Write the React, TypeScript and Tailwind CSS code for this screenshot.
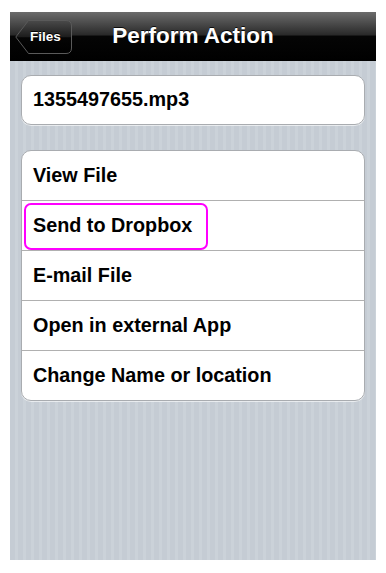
const rows = ['View File', 'Send to Dropbox', 'E-mail File', 'Open in external App', 'Change Name or location'];

function BackButton() {
  return (
    <button className="relative h-[34px] w-[57px] shrink-0 text-left">
      <svg className="absolute inset-0" width="57" height="34" viewBox="0 0 57 34">
        <defs>
          <linearGradient id="bb" x1="0" y1="0" x2="0" y2="1">
            <stop offset="0" stopColor="#4a4a4a" />
            <stop offset="0.5" stopColor="#1c1c1c" />
            <stop offset="0.52" stopColor="#050505" />
            <stop offset="1" stopColor="#000" />
          </linearGradient>
        </defs>
        <path
          d="M0.8 17 L13.5 0.5 H51 Q56.5 0.5 56.5 6 V28 Q56.5 33.5 51 33.5 H13.5 Z"
          fill="url(#bb)"
          stroke="#5a5a5a"
          strokeWidth="1"
        />
      </svg>
      <span className="relative block pl-[15px] pt-[1px] text-left text-[13.5px] font-bold text-white [text-shadow:0_-1px_0_rgba(0,0,0,0.9)]">
        Files
      </span>
    </button>
  );
}

export default function App() {
  return (
    <div className="h-[573px] w-[386px] bg-white px-[10px] pt-[12px] font-['Liberation_Sans',Arial,sans-serif]">
      <div className="flex h-[548px] flex-col bg-[repeating-linear-gradient(90deg,#c5ccd4_0px,#c5ccd4_5px,#cbd2d9_5px,#cbd2d9_8px)]">
        <div className="relative flex h-[49px] items-center bg-[linear-gradient(#6c6c6c,#2a2a2a_46%,#050505_50%,#000)] pl-[5px]">
          <BackButton />
          <h1 className="pointer-events-none absolute inset-x-0 top-[7px] text-center text-[22.5px] font-bold text-white [text-shadow:0_-1px_0_rgba(0,0,0,0.8)]">
            Perform Action
          </h1>
        </div>

        <div className="flex flex-col gap-[25px] px-[11px] pt-[14px]">
          <div className="flex h-[50px] items-center rounded-[10px] border border-[#a9acb0] bg-white px-[11px] shadow-[0_1px_0_rgba(255,255,255,0.6)]">
            <span className="text-[19.8px] font-bold text-black">1355497655.mp3</span>
          </div>

          <div className="overflow-hidden rounded-[10px] border border-[#a9acb0] bg-white shadow-[0_1px_0_rgba(255,255,255,0.6)]">
            {rows.map((label, i) => (
              <div
                key={label}
                className={`relative flex items-center px-[11px] ${i > 0 ? 'h-[50px] border-t border-[#b0b0b0]' : 'h-[49px]'}`}
              >
                <span className="text-[19.8px] font-bold text-black">{label}</span>
                {i === 1 && (
                  <div className="pointer-events-none absolute left-[2px] top-[2px] h-[47px] w-[184px] rounded-[7px] border-2 border-[#ff00ff]" />
                )}
              </div>
            ))}
          </div>
        </div>
      </div>
    </div>
  );
}
